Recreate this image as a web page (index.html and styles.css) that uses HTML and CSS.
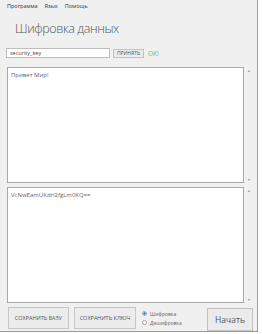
FILE: index.html
```html
<!DOCTYPE html>
<html lang="ru">
<head>
<meta charset="utf-8">
<title>Шифровка данных</title>
<link rel="stylesheet" href="styles.css">
</head>
<body>
<div class="window">
  <div class="menu">
    <span>Программа</span>
    <span>Язык</span>
    <span>Помощь</span>
  </div>
  <div class="title">Шифровка данных</div>
  <div class="keyrow">
    <div class="key">security_key</div>
    <div class="accept">ПРИНЯТЬ</div>
    <div class="ok">OK!</div>
  </div>
  <div class="area area1">
    <div class="box">Привет Мир!</div>
    <div class="scroll"><span>▲</span><span>▼</span></div>
  </div>
  <div class="area area2">
    <div class="box">VcNwEamUKdrl2fgLm0KQ==</div>
    <div class="scroll"><span>▲</span><span>▼</span></div>
  </div>
  <div class="bottom">
    <div class="btn btn-base">СОХРАНИТЬ БАЗУ</div>
    <div class="btn btn-key">СОХРАНИТЬ КЛЮЧ</div>
    <div class="radios">
      <div class="radio-row"><span class="radio on"></span>Шифровка</div>
      <div class="radio-row"><span class="radio"></span>Дешифровка</div>
    </div>
    <div class="start">Начать</div>
  </div>
</div>
</body>
</html>
```
FILE: styles.css
```css
* { box-sizing: border-box; }
body {
  margin: 0;
  background: #ffffff;
  font-family: "Open Sans", "Noto Sans", sans-serif;
}
.window {
  width: 258px;
  height: 332px;
  background: #f0f0f0;
  border-right: 1px solid #9a9a9a;
  border-bottom: 1px solid #9a9a9a;
  display: flex;
  flex-direction: column;
}
.menu {
  height: 12px;
  display: flex;
  gap: 7px;
  padding-left: 7px;
  font-size: 5.5px;
  line-height: 12px;
  color: #333;
}
.title {
  margin: 7px 0 0 15px;
  height: 20px;
  line-height: 20px;
  font-size: 12.5px;
  letter-spacing: -0.4px;
  font-weight: 300;
  color: #555;
}
.keyrow {
  margin: 9px 0 0 6px;
  height: 10px;
  display: flex;
  align-items: center;
}
.key {
  width: 104px;
  height: 10px;
  border: 1px solid #bdbdbd;
  background: #fff;
  font-size: 5.5px;
  line-height: 8px;
  padding-left: 3px;
  color: #444;
}
.accept {
  margin-left: 3px;
  width: 31px;
  height: 9px;
  border: 1px solid #c2c2c2;
  background: #ebebeb;
  font-size: 5px;
  line-height: 7px;
  text-align: center;
  color: #555;
}
.ok {
  margin-left: 4px;
  font-size: 6.5px;
  color: #6cc06c;
}
.area {
  margin-left: 7px;
  display: flex;
}
.area1 { margin-top: 9px; height: 116px; }
.area2 { margin-top: 4px; height: 117px; }
.box {
  width: 237px;
  height: 100%;
  border: 1px solid #a9a9a9;
  background: #fff;
  font-size: 6px;
  padding: 3px 3px;
  color: #666;
}
.scroll {
  width: 10px;
  display: flex;
  flex-direction: column;
  justify-content: space-between;
  align-items: center;
  padding: 1px 0 1px;
  font-size: 3.5px;
  color: #999;
}
.bottom {
  margin: 4px 0 0 8px;
  display: flex;
  align-items: flex-start;
}
.btn {
  height: 22px;
  border: 1px solid #c6c6c6;
  background: #ececec;
  font-size: 5.5px;
  line-height: 20px;
  text-align: center;
  color: #555;
}
.btn-base { width: 61px; }
.btn-key { width: 62px; margin-left: 5px; }
.radios {
  margin: 3px 0 0 6px;
  display: flex;
  flex-direction: column;
  gap: 2px;
  font-size: 5px;
  color: #666;
}
.radio-row {
  display: flex;
  align-items: center;
  gap: 3px;
  height: 7px;
}
.radio {
  width: 5px;
  height: 5px;
  border-radius: 50%;
  border: 1px solid #a0a0a0;
  background: #fff;
}
.radio.on {
  background: radial-gradient(circle, #3a78c2 45%, #ffffff 55%);
}
.start {
  margin-left: auto;
  margin-right: 4px;
  margin-top: 1px;
  width: 46px;
  height: 23px;
  border: 1px solid #c2c2c2;
  background: #ebebeb;
  font-size: 8.5px;
  line-height: 21px;
  text-align: center;
  color: #555;
}
```
